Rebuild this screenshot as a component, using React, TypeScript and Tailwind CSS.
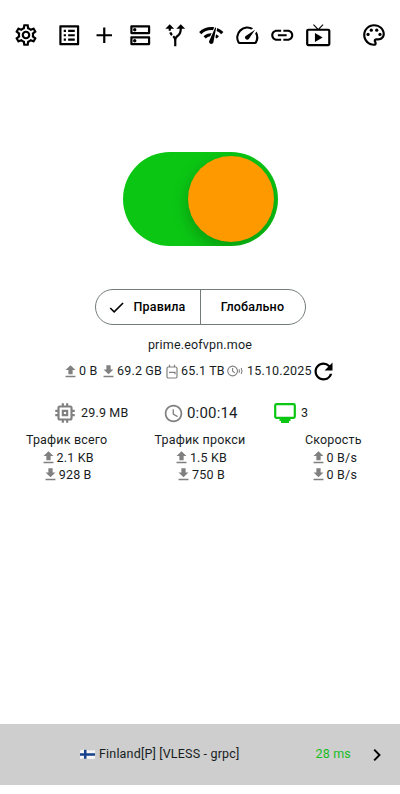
import type { IconType } from "react-icons";
import {
  MdAdd,
  MdAltRoute,
  MdCheck,
  MdDownload,
  MdLink,
  MdLiveTv,
  MdNetworkCheck,
  MdOutlineDns,
  MdOutlineListAlt,
  MdOutlineMemory,
  MdOutlinePalette,
  MdOutlineSettings,
  MdRefresh,
  MdSchedule,
  MdSpeed,
  MdUpload,
} from "react-icons/md";

const tools: IconType[] = [
  MdOutlineListAlt,
  MdAdd,
  MdOutlineDns,
  MdAltRoute,
  MdNetworkCheck,
  MdSpeed,
  MdLink,
  MdLiveTv,
];

const traffic = [
  { title: "Трафик всего", up: "2.1 KB", down: "928 B" },
  { title: "Трафик прокси", up: "1.5 KB", down: "750 B" },
  { title: "Скорость", up: "0 B/s", down: "0 B/s" },
];

const Toolbar = () => (
  <header className="flex h-[70px] items-center pl-[13px] pr-[13px] text-black">
    <MdOutlineSettings size={26} />
    <div className="ml-[12px] flex flex-1">
      {tools.map((Icon, i) => (
        <button key={i} className="flex w-[35.6px] justify-center">
          <Icon size={26.5} />
        </button>
      ))}
    </div>
    <MdOutlinePalette size={26} />
  </header>
);

const PowerSwitch = () => (
  <button className="mx-auto mt-[82px] flex h-[94px] w-[155px] items-center justify-end overflow-hidden rounded-full bg-[#0bc714] pr-1">
    <span className="size-[86px] rounded-full bg-[#ff9900] shadow-[0_6px_16px_1px_rgba(0,0,0,0.22)]" />
  </button>
);

const ModeSelector = () => (
  <div className="mx-auto mt-[43px] flex h-9 w-[211px] rounded-full border border-[#747b7b] font-medium text-black">
    <button className="flex w-[105px] items-center gap-2 border-r border-[#747b7b] pl-[11px]">
      <MdCheck size={19} />
      Правила
    </button>
    <button className="flex-1">Глобально</button>
  </div>
);

const UploadIcon = () => <MdUpload size={17} className="shrink-0 text-[#808080]" />;

const DownloadIcon = () => <MdDownload size={17} className="shrink-0 text-[#808080]" />;

const QuotaIcon = () => (
  <svg width="12" height="15" viewBox="0 0 12 15" fill="none" stroke="#808080" strokeWidth="1.2">
    <rect x="1" y="3" width="10" height="11" rx="1.2" />
    <path d="M3.5 3V.8M8.5 3V.8M3 8.3h6v2" />
  </svg>
);

const ExpiryIcon = () => (
  <svg width="18" height="14" viewBox="0 0 18 14" fill="none" stroke="#808080" strokeWidth="1.1">
    <circle cx="6.6" cy="7" r="4.9" />
    <path d="M6.6 4v3.3l2.3 1.6M13 5.3q.8 1.7 0 3.4M15.2 4q1.6 3 0 6" />
  </svg>
);

const MonitorIcon = () => (
  <svg width="24" height="22" viewBox="0 0 24 22" fill="none">
    <rect x="2.2" y="2.2" width="19.6" height="13.6" rx="1.2" stroke="#0bc714" strokeWidth="2.2" />
    <path d="M6.5 17h11v2H16v2H8v-2H6.5Z" fill="#0bc714" />
  </svg>
);

const Subscription = () => (
  <div className="flex h-[26px] items-center pl-[62px]">
    <UploadIcon />
    <span className="w-[21px]">0 B</span>
    <DownloadIcon />
    <span className="w-[49px]">69.2 GB</span>
    <QuotaIcon />
    <span className="ml-[3px] w-[45px]">65.1 TB</span>
    <ExpiryIcon />
    <span className="ml-[3px] w-[63px]">15.10.2025</span>
    <MdRefresh size={27} className="shrink-0 text-black" />
  </div>
);

const App = () => (
  <main className="flex h-[794px] w-[400px] flex-col overflow-hidden bg-white font-['Roboto',sans-serif] text-[12.5px] tracking-[0.18px] whitespace-nowrap text-[#171d1e]">
    <Toolbar />
    <PowerSwitch />
    <ModeSelector />
    <p className="mt-[10px] text-center leading-5">prime.eofvpn.moe</p>
    <div className="mt-[3px]">
      <Subscription />
    </div>

    <div className="mt-[17px] flex h-6 items-center pl-[52px]">
      <div className="flex w-[111px] items-center gap-[3px]">
        <MdOutlineMemory size={26} className="text-[#808080]" />
        29.9 MB
      </div>
      <div className="flex w-[110px] items-center gap-[3px] text-[15px]">
        <MdSchedule size={21} className="text-[#808080]" />
        0:00:14
      </div>
      <div className="flex items-center gap-[4px]">
        <MonitorIcon />3
      </div>
    </div>

    <div className="mt-[6px] grid grid-cols-3 leading-[17.6px]">
      {traffic.map((t) => (
        <div key={t.title} className="flex flex-col items-center">
          <span>{t.title}</span>
          <span className="flex items-center">
            <UploadIcon />
            {t.up}
          </span>
          <span className="flex items-center">
            <DownloadIcon />
            {t.down}
          </span>
        </div>
      ))}
    </div>

    <footer className="mb-[9px] mt-auto flex h-[61px] items-center bg-[#cecece]">
      <span className="ml-[80px] flex items-center gap-1">
        <svg width="15" height="11" viewBox="0 0 15 11">
          <path d="M0 1.5Q4 0 7.5 1T15 1V9.5Q11 10.5 7.5 9.7T0 10Z" fill="#f5f5f5" />
          <path d="M4 .7h2.5v3.5H15v2.6H6.5v3H4v-3H0V4.2h4Z" fill="#16438c" />
        </svg>
        Finland[P] [VLESS - grpc]
      </span>
      <span className="ml-auto mr-[22px] font-[450] text-[#16bd1e]">28 ms</span>
      <svg width="8" height="14" viewBox="0 0 8 14" className="mr-[19px]">
        <path d="m1.2 1.6 5.3 5.4-5.3 5.4" fill="none" stroke="black" strokeWidth="1.9" />
      </svg>
    </footer>
  </main>
);

export default App;
